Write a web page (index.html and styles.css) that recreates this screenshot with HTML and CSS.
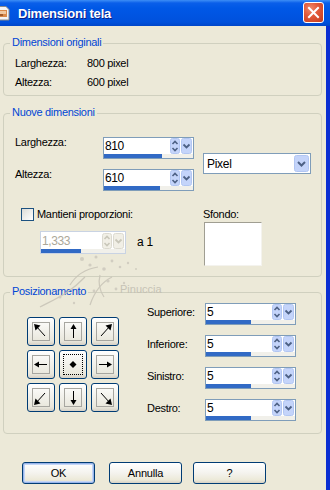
FILE: index.html
```html
<!DOCTYPE html>
<html lang="it">
<head>
<meta charset="utf-8">
<title>Dimensioni tela</title>
<link rel="stylesheet" href="styles.css">
</head>
<body>
<div class="win">
  <div class="titlebar">
    <span class="ticon">
      <svg width="16" height="16" viewBox="0 0 16 16">
        <path d="M1 1.5h9l3 3V15H1z" fill="#f4f4f4" stroke="#8a8a8a"/>
        <rect x="3" y="5" width="8" height="7" fill="#d98a4a"/>
        <rect x="4" y="6" width="6" height="3" fill="#f0c8a0"/>
        <rect x="4" y="9" width="3" height="2" fill="#a05a2a"/>
      </svg>
    </span>
    <span class="ttext">Dimensioni tela</span>
    <span class="close">
      <svg width="21" height="21" viewBox="0 0 21 21">
        <path d="M6 6l9 9M15 6l-9 9" stroke="#fff" stroke-width="2" stroke-linecap="square"/>
      </svg>
    </span>
  </div>

  <div class="content">
    <div class="grp g1">
      <div class="legend">Dimensioni originali</div>
      <div class="kv"><span class="k">Larghezza:</span><span>800 pixel</span></div>
      <div class="kv"><span class="k">Altezza:</span><span>600 pixel</span></div>
    </div>

    <div class="grp g2">
      <div class="legend">Nuove dimensioni</div>
      <div class="g2top">
        <div class="sizes">
          <div class="srow">
            <span class="slbl">Larghezza:</span>
            <div class="spin">
              <div class="spin-main">
                <span class="spin-val">810</span>
                <span class="spin-ud"><svg width="10" height="16" viewBox="0 0 10 16"><rect x="0.5" y="0.5" width="9" height="15" rx="2" fill="#c4d4fa" stroke="#b2c6f2"/><path d="M2.5 6l2.5-2.5L7.5 6M2.5 10l2.5 2.5L7.5 10" fill="none" stroke="#4d6185" stroke-width="1.6"/></svg></span>
                <span class="spin-dd"><svg width="11" height="16" viewBox="0 0 11 16"><rect x="0.5" y="0.5" width="10" height="15" rx="2" fill="#c4d4fa" stroke="#b2c6f2"/><path d="M2.5 6.5l3 3 3-3" fill="none" stroke="#4d6185" stroke-width="1.8"/></svg></span>
              </div>
              <div class="spin-bar"><div class="spin-fill" style="width:65%"></div></div>
            </div>
          </div>
          <div class="srow">
            <span class="slbl">Altezza:</span>
            <div class="spin">
              <div class="spin-main">
                <span class="spin-val">610</span>
                <span class="spin-ud"><svg width="10" height="16" viewBox="0 0 10 16"><rect x="0.5" y="0.5" width="9" height="15" rx="2" fill="#c4d4fa" stroke="#b2c6f2"/><path d="M2.5 6l2.5-2.5L7.5 6M2.5 10l2.5 2.5L7.5 10" fill="none" stroke="#4d6185" stroke-width="1.6"/></svg></span>
                <span class="spin-dd"><svg width="11" height="16" viewBox="0 0 11 16"><rect x="0.5" y="0.5" width="10" height="15" rx="2" fill="#c4d4fa" stroke="#b2c6f2"/><path d="M2.5 6.5l3 3 3-3" fill="none" stroke="#4d6185" stroke-width="1.8"/></svg></span>
              </div>
              <div class="spin-bar"><div class="spin-fill" style="width:63%"></div></div>
            </div>
          </div>
        </div>
        <div class="combo">
          <span class="combo-val">Pixel</span>
          <span class="combo-dd"><svg width="15" height="17" viewBox="0 0 15 17"><rect x="0.5" y="0.5" width="14" height="16" rx="2" fill="#c4d4fa" stroke="#b2c6f2"/><path d="M4 7l3.5 3.5L11 7" fill="none" stroke="#4d6185" stroke-width="2"/></svg></span>
        </div>
      </div>
      <div class="g2bot">
        <div class="propcol">
          <div class="chkrow"><span class="chk"></span><span>Mantieni proporzioni:</span></div>
          <div class="ratiorow">
            <div class="spin spin-dis">
              <div class="spin-main">
                <span class="spin-val">1,333</span>
                <span class="spin-ud"><svg width="10" height="16" viewBox="0 0 10 16"><rect x="0.5" y="0.5" width="9" height="15" rx="2" fill="#f1efe6" stroke="#dcdad0"/><path d="M2.5 6l2.5-2.5L7.5 6M2.5 10l2.5 2.5L7.5 10" fill="none" stroke="#c9c7ba" stroke-width="1.6"/></svg></span>
                <span class="spin-dd"><svg width="11" height="16" viewBox="0 0 11 16"><rect x="0.5" y="0.5" width="10" height="15" rx="2" fill="#f1efe6" stroke="#dcdad0"/><path d="M2.5 6.5l3 3 3-3" fill="none" stroke="#c9c7ba" stroke-width="1.8"/></svg></span>
              </div>
              <div class="spin-bar"><div class="spin-fill" style="width:48%"></div></div>
            </div>
            <span class="a1">a 1</span>
          </div>
        </div>
        <div class="sfcol">
          <span>Sfondo:</span>
          <div class="swatch"></div>
        </div>
      </div>
    </div>

    <div class="grp g3">
      <div class="legend">Posizionamento</div>
      <div class="g3body">
        <div class="pad">
          <button class="pbtn"><svg width="18" height="19" viewBox="0 0 18 19"><rect x="0.5" y="0.5" width="17" height="18" fill="none" stroke="#a7a6a0"/><path d="M13 14L4 4" stroke="#000"/><path d="M2 2l6.5 1.5-5 5z" fill="#000"/></svg></button>
          <button class="pbtn"><svg width="18" height="19" viewBox="0 0 18 19"><rect x="0.5" y="0.5" width="17" height="18" fill="none" stroke="#a7a6a0"/><path d="M9.5 16V5" stroke="#000"/><path d="M9.5 2l3 5h-6z" fill="#000"/></svg></button>
          <button class="pbtn"><svg width="18" height="19" viewBox="0 0 18 19"><rect x="0.5" y="0.5" width="17" height="18" fill="none" stroke="#a7a6a0"/><path d="M5 14L14 4" stroke="#000"/><path d="M16 2l-6.5 1.5 5 5z" fill="#000"/></svg></button>
          <button class="pbtn"><svg width="18" height="19" viewBox="0 0 18 19"><rect x="0.5" y="0.5" width="17" height="18" fill="none" stroke="#a7a6a0"/><path d="M5 9.5h10" stroke="#000"/><path d="M2 9.5l5-3v6z" fill="#000"/></svg></button>
          <button class="pbtn pfocus"><svg width="18" height="19" viewBox="0 0 18 19"><rect x="0.5" y="0.5" width="17" height="18" fill="none" stroke="#a7a6a0"/><path d="M9 6l3.5 3.5L9 13 5.5 9.5z" fill="#000"/></svg></button>
          <button class="pbtn"><svg width="18" height="19" viewBox="0 0 18 19"><rect x="0.5" y="0.5" width="17" height="18" fill="none" stroke="#a7a6a0"/><path d="M3 9.5h10" stroke="#000"/><path d="M16 9.5l-5-3v6z" fill="#000"/></svg></button>
          <button class="pbtn"><svg width="18" height="19" viewBox="0 0 18 19"><rect x="0.5" y="0.5" width="17" height="18" fill="none" stroke="#a7a6a0"/><path d="M13 5L4 15" stroke="#000"/><path d="M2 17l1.5-6.5 5 5z" fill="#000"/></svg></button>
          <button class="pbtn"><svg width="18" height="19" viewBox="0 0 18 19"><rect x="0.5" y="0.5" width="17" height="18" fill="none" stroke="#a7a6a0"/><path d="M9.5 3v11" stroke="#000"/><path d="M9.5 17l3-5h-6z" fill="#000"/></svg></button>
          <button class="pbtn"><svg width="18" height="19" viewBox="0 0 18 19"><rect x="0.5" y="0.5" width="17" height="18" fill="none" stroke="#a7a6a0"/><path d="M5 5l9 10" stroke="#000"/><path d="M16 17l-1.5-6.5-5 5z" fill="#000"/></svg></button>
        </div>
        <div class="margins">
          <div class="mrow"><span class="mlbl">Superiore:</span>
            <div class="spin"><div class="spin-main"><span class="spin-val">5</span>
              <span class="spin-ud"><svg width="10" height="16" viewBox="0 0 10 16"><rect x="0.5" y="0.5" width="9" height="15" rx="2" fill="#c4d4fa" stroke="#b2c6f2"/><path d="M2.5 6l2.5-2.5L7.5 6M2.5 10l2.5 2.5L7.5 10" fill="none" stroke="#4d6185" stroke-width="1.6"/></svg></span>
              <span class="spin-dd"><svg width="11" height="16" viewBox="0 0 11 16"><rect x="0.5" y="0.5" width="10" height="15" rx="2" fill="#c4d4fa" stroke="#b2c6f2"/><path d="M2.5 6.5l3 3 3-3" fill="none" stroke="#4d6185" stroke-width="1.8"/></svg></span></div>
              <div class="spin-bar"><div class="spin-fill" style="width:51%"></div></div></div>
          </div>
          <div class="mrow"><span class="mlbl">Inferiore:</span>
            <div class="spin"><div class="spin-main"><span class="spin-val">5</span>
              <span class="spin-ud"><svg width="10" height="16" viewBox="0 0 10 16"><rect x="0.5" y="0.5" width="9" height="15" rx="2" fill="#c4d4fa" stroke="#b2c6f2"/><path d="M2.5 6l2.5-2.5L7.5 6M2.5 10l2.5 2.5L7.5 10" fill="none" stroke="#4d6185" stroke-width="1.6"/></svg></span>
              <span class="spin-dd"><svg width="11" height="16" viewBox="0 0 11 16"><rect x="0.5" y="0.5" width="10" height="15" rx="2" fill="#c4d4fa" stroke="#b2c6f2"/><path d="M2.5 6.5l3 3 3-3" fill="none" stroke="#4d6185" stroke-width="1.8"/></svg></span></div>
              <div class="spin-bar"><div class="spin-fill" style="width:51%"></div></div></div>
          </div>
          <div class="mrow"><span class="mlbl">Sinistro:</span>
            <div class="spin"><div class="spin-main"><span class="spin-val">5</span>
              <span class="spin-ud"><svg width="10" height="16" viewBox="0 0 10 16"><rect x="0.5" y="0.5" width="9" height="15" rx="2" fill="#c4d4fa" stroke="#b2c6f2"/><path d="M2.5 6l2.5-2.5L7.5 6M2.5 10l2.5 2.5L7.5 10" fill="none" stroke="#4d6185" stroke-width="1.6"/></svg></span>
              <span class="spin-dd"><svg width="11" height="16" viewBox="0 0 11 16"><rect x="0.5" y="0.5" width="10" height="15" rx="2" fill="#c4d4fa" stroke="#b2c6f2"/><path d="M2.5 6.5l3 3 3-3" fill="none" stroke="#4d6185" stroke-width="1.8"/></svg></span></div>
              <div class="spin-bar"><div class="spin-fill" style="width:51%"></div></div></div>
          </div>
          <div class="mrow"><span class="mlbl">Destro:</span>
            <div class="spin"><div class="spin-main"><span class="spin-val">5</span>
              <span class="spin-ud"><svg width="10" height="16" viewBox="0 0 10 16"><rect x="0.5" y="0.5" width="9" height="15" rx="2" fill="#c4d4fa" stroke="#b2c6f2"/><path d="M2.5 6l2.5-2.5L7.5 6M2.5 10l2.5 2.5L7.5 10" fill="none" stroke="#4d6185" stroke-width="1.6"/></svg></span>
              <span class="spin-dd"><svg width="11" height="16" viewBox="0 0 11 16"><rect x="0.5" y="0.5" width="10" height="15" rx="2" fill="#c4d4fa" stroke="#b2c6f2"/><path d="M2.5 6.5l3 3 3-3" fill="none" stroke="#4d6185" stroke-width="1.8"/></svg></span></div>
              <div class="spin-bar"><div class="spin-fill" style="width:51%"></div></div></div>
          </div>
        </div>
      </div>
    </div>

    <div class="buttons">
      <button class="btn btn-default">OK</button>
      <button class="btn btn-annulla">Annulla</button>
      <button class="btn btn-help">?</button>
    </div>
  </div>

  <div class="watermark">
    <svg width="140" height="70" viewBox="0 0 140 70">
      <g fill="none" stroke="#c9c5b8" stroke-width="1.2">
        <path d="M10 62c15-8 30-14 45-30"/>
        <path d="M40 40c6-10 16-16 28-18"/>
        <path d="M60 60c4-12 10-22 22-28"/>
        <path d="M70 30c-2 8 0 16 4 22"/>
      </g>
      <g fill="#cfcbbf">
        <circle cx="52" cy="14" r="2"/><circle cx="60" cy="20" r="1.6"/><circle cx="66" cy="12" r="1.5"/>
        <circle cx="74" cy="24" r="1.8"/><circle cx="82" cy="16" r="1.4"/><circle cx="90" cy="22" r="1.3"/>
        <circle cx="98" cy="18" r="1.2"/><circle cx="106" cy="24" r="1"/><circle cx="78" cy="36" r="1.6"/>
        <circle cx="86" cy="44" r="1.4"/><circle cx="30" cy="52" r="1.5"/><circle cx="44" cy="58" r="1.2"/>
        <circle cx="64" cy="46" r="1.4"/><circle cx="94" cy="38" r="1.2"/>
      </g>
    </svg>
    <span class="wm-text">Pinuccia</span>
  </div>
</div>
</body>
</html>
```

FILE: styles.css
```css
html, body {
  margin: 0;
  padding: 0;
}
body {
  width: 330px;
  height: 490px;
  overflow: hidden;
  background: #ece9d8;
  font-family: "Liberation Sans", Arial, sans-serif;
  font-size: 11px;
  letter-spacing: -0.3px;
  color: #000;
}
.win {
  position: relative;
  width: 330px;
  height: 490px;
  box-sizing: border-box;
  border-right: 4px solid #0a2ed2;
  background: #ece9d8;
}
.titlebar {
  height: 26px;
  display: flex;
  align-items: center;
  background: linear-gradient(to bottom, #3d8ef6 0, #0a5fe9 3px, #0058e6 8px, #0055e3 50%, #0051dc 85%, #0046c9 100%);
  margin-right: -4px;
  padding-right: 4px;
}
.ticon {
  display: flex;
  margin-left: -4px;
  width: 16px;
  height: 16px;
}
.ttext {
  margin-left: 6px;
  color: #fff;
  font-weight: bold;
  font-size: 13px;
  letter-spacing: -0.2px;
  text-shadow: 1px 1px 0 #0a1d8a;
  flex: 1;
}
.close {
  display: flex;
  width: 21px;
  height: 21px;
  box-sizing: border-box;
  border: 1px solid #fff;
  border-radius: 3px;
  background: radial-gradient(circle at 35% 30%, #f08a6c 0, #e25a3a 40%, #c43a1c 100%);
  margin-right: 2px;
  margin-top: -1px;
  align-items: center;
  justify-content: center;
}
.close svg {
  margin: -1px;
}
.content {
  padding: 17px 0 0 3px;
}
.grp {
  width: 319px;
  box-sizing: border-box;
  border: 1px solid #d0d0bf;
  border-radius: 4px;
  padding-left: 11px;
}
.legend {
  margin-top: -8px;
  margin-left: -5px;
  padding: 0 2px;
  width: max-content;
  background: #ece9d8;
  color: #0046d5;
  line-height: 13px;
}
.g1 {
  padding-bottom: 6px;
}
.kv {
  display: flex;
  line-height: 13px;
  margin-top: 6px;
}
.g1 .legend + .kv {
  margin-top: 8px;
}
.k {
  width: 72px;
}
.g2 {
  margin-top: 17px;
  padding-bottom: 10px;
}
.g2top {
  display: flex;
  align-items: center;
  margin-top: 18px;
}
.sizes {
  display: flex;
  flex-direction: column;
  gap: 10px;
}
.srow {
  display: flex;
  align-items: flex-start;
}
.slbl {
  width: 88px;
  line-height: 13px;
  margin-top: -1px;
}
.spin {
  width: 91px;
  height: 22px;
  box-sizing: border-box;
  border: 1px solid #7f9db9;
  background: #fff;
  display: flex;
  flex-direction: column;
}
.spin-main {
  height: 16px;
  display: flex;
  align-items: center;
  padding-top: 0;
}
.spin-val {
  flex: 1;
  padding-left: 1px;
  font-size: 12px;
  letter-spacing: -0.4px;
  line-height: 16px;
}
.spin-ud, .spin-dd {
  display: flex;
}
.spin-ud {
  margin-right: 1px;
}
.spin-dd {
  margin-right: 1px;
}
.spin-bar {
  margin-top: auto;
  height: 4px;
  background: #f1f0ea;
}
.spin-fill {
  height: 4px;
  background: #316ac5;
}
.combo {
  margin-left: 9px;
  width: 108px;
  height: 21px;
  box-sizing: border-box;
  border: 1px solid #7f9db9;
  background: #fff;
  display: flex;
  align-items: center;
  margin-top: -1px;
}
.combo-val {
  flex: 1;
  padding-left: 3px;
  font-size: 12px;
  letter-spacing: -0.3px;
}
.combo-dd {
  display: flex;
  margin-right: 1px;
}
.g2bot {
  display: flex;
  margin-top: 17px;
}
.propcol {
  width: 188px;
}
.chkrow {
  display: flex;
  align-items: center;
  height: 13px;
  line-height: 13px;
}
.chk {
  width: 13px;
  height: 13px;
  box-sizing: border-box;
  border: 1px solid #1c5180;
  background: linear-gradient(135deg, #dcdcd7 0, #fff 100%);
  margin-left: 6px;
  margin-right: 3px;
}
.ratiorow {
  display: flex;
  align-items: center;
  margin-top: 10px;
  margin-left: 25px;
}
.spin-dis {
  width: 86px;
  height: 23px;
  border-color: #c9d3e3;
  background: #fff;
}
.spin-dis .spin-main {
  height: 17px;
}
.spin-dis .spin-val {
  color: #aca899;
}
.a1 {
  margin-left: 11px;
  font-size: 12px;
  margin-top: -1px;
}
.sfcol {
  display: flex;
  flex-direction: column;
  line-height: 13px;
}
.swatch {
  margin-top: 1px;
  margin-left: 1px;
  width: 58px;
  height: 44px;
  box-sizing: border-box;
  background: #fff;
  border-top: 1px solid #a09e92;
  border-left: 1px solid #a09e92;
  border-right: 1px solid #f4f3ee;
  border-bottom: 1px solid #f4f3ee;
}
.g3 {
  margin-top: 15px;
  padding-bottom: 12px;
}
.g3body {
  display: flex;
  align-items: flex-start;
}
.pad {
  margin-top: 19px;
  margin-left: 12px;
  display: grid;
  grid-template-columns: repeat(3, 28px);
  grid-auto-rows: 29px;
  gap: 4px;
}
.pbtn {
  margin: 0;
  padding: 0;
  width: 28px;
  height: 29px;
  box-sizing: border-box;
  border: 1px solid #003c74;
  border-radius: 3px;
  background: linear-gradient(to bottom, #ffffff 0, #f4f3ee 40%, #e9e7dc 85%, #d6d0c5 100%);
  display: flex;
  align-items: center;
  justify-content: center;
}
.pfocus {
  outline: 1px dotted #000;
  outline-offset: -5px;
}
.pfocus svg rect {
  stroke: none;
}
.margins {
  margin-top: 5px;
  margin-left: 28px;
  display: flex;
  flex-direction: column;
  gap: 10px;
}
.mrow {
  display: flex;
  align-items: flex-start;
}
.mlbl {
  width: 58px;
  line-height: 13px;
  margin-top: 3px;
}
.buttons {
  display: flex;
  margin-top: 28px;
  margin-left: 19px;
}
.btn {
  margin: 0;
  padding: 0;
  width: 73px;
  height: 22px;
  box-sizing: border-box;
  border: 1px solid #003c74;
  border-radius: 3px;
  background: linear-gradient(to bottom, #ffffff 0, #f4f3ee 50%, #ece9d8 85%, #d6d0c5 100%);
  font-family: "Liberation Sans", Arial, sans-serif;
  font-size: 11px;
  letter-spacing: -0.2px;
  color: #000;
}
.btn-default {
  box-shadow: inset 0 0 0 1px #98b4ea, inset 0 0 0 2px #c4d6f6;
}
.btn-annulla {
  margin-left: 14px;
}
.btn-help {
  margin-left: 11px;
}
.watermark {
  position: absolute;
  left: 30px;
  top: 245px;
  width: 150px;
  height: 70px;
  pointer-events: none;
  opacity: 0.9;
}
.watermark svg {
  position: absolute;
  left: 0;
  top: 0;
}
.wm-text {
  position: absolute;
  left: 90px;
  top: 38px;
  color: #c3bfb2;
  font-size: 11px;
  letter-spacing: 0;
}
```
